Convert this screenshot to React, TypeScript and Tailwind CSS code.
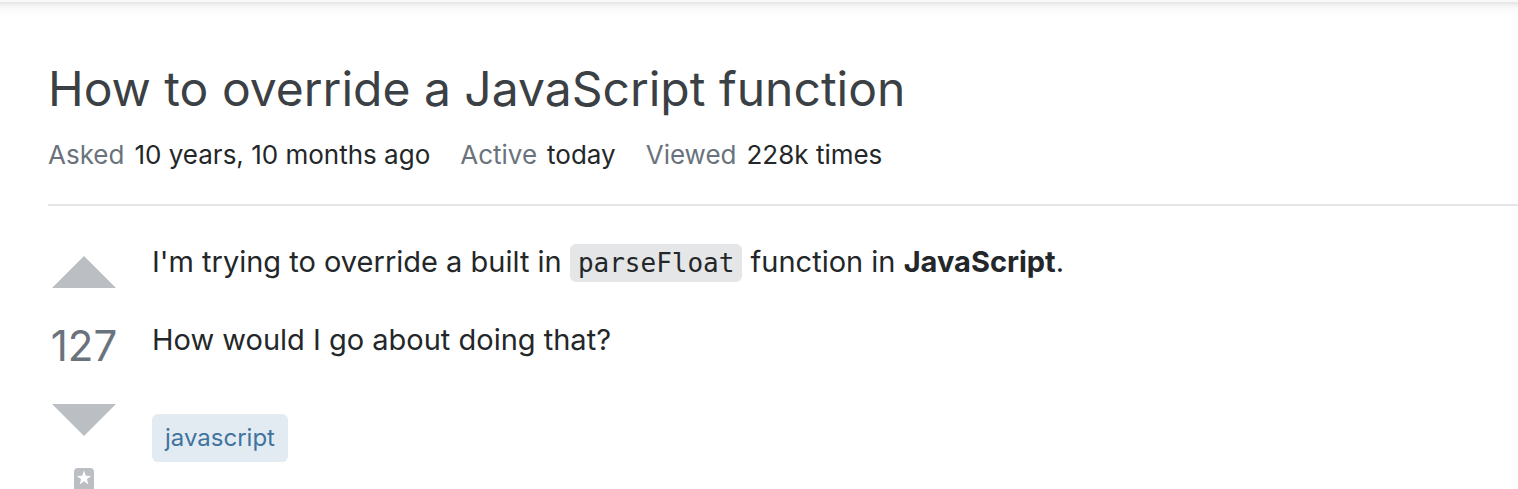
export default function App() {
  return (
    <div className="overflow-hidden bg-white font-['Inter','Liberation_Sans',sans-serif] text-[#242729]">
      <header className="-mx-6 -mt-12 h-[50px] bg-[#f8f8f8] shadow-[0_2px_4px_rgba(0,0,0,0.05),0_2px_8px_rgba(0,0,0,0.05),0_4px_16px_rgba(0,0,0,0.05)]" />
      <main className="pl-12">
        <h1 className="pt-[52px] text-[48px] leading-[70px] text-[#3b4045]">How to override a JavaScript function</h1>
        <dl className="flex gap-[30px] border-b-2 border-[#e4e5e7] pt-[14px] pb-8 text-[26px] leading-[34px]">
          <div className="flex gap-[10px]"><dt className="text-[#6a737c]">Asked</dt><dd>10 years, 10 months ago</dd></div>
          <div className="flex gap-[10px]"><dt className="text-[#6a737c]">Active</dt><dd>today</dd></div>
          <div className="flex gap-[10px]"><dt className="text-[#6a737c]">Viewed</dt><dd>228k times</dd></div>
        </dl>
        <div className="flex gap-8 pt-[30px]">
          <div className="flex w-[72px] shrink-0 flex-col items-center text-[#bbbfc3]">
            <button type="button" aria-label="Up vote"><svg className="size-[72px]" viewBox="0 0 36 36" fill="currentColor"><path d="M2 26h32L18 10z" /></svg></button>
            <div className="py-3 text-[42px] leading-[52px] text-[#6a737c]">127</div>
            <button type="button" aria-label="Down vote"><svg className="size-[72px]" viewBox="0 0 36 36" fill="currentColor"><path d="M2 10h32L18 26z" /></svg></button>
            <button type="button" aria-label="Bookmark" className="pt-3">
              <svg width="20" height="36" viewBox="0 0 20 36" fill="currentColor">
                <path d="M4 0h12a4 4 0 0 1 4 4v32l-10-8-10 8V4a4 4 0 0 1 4-4z" />
                <path fill="#fff" d="M10 2.6l1.8 5.2 5.3.1-4.2 3.3 1.5 5.2-4.4-3.1-4.4 3.1 1.5-5.2-4.2-3.3 5.3-.1z" />
              </svg>
            </button>
          </div>
          <div className="pt-[5px] text-[29px] leading-[42px]">
            <p>I'm trying to override a built in <code className="rounded-md bg-[#e4e6e8] px-2 py-1 font-['DejaVu_Sans_Mono',monospace] text-[26px] leading-[30px]">parseFloat</code> function in <strong>JavaScript</strong>.</p>
            <p className="pt-9">How would I go about doing that?</p>
            <a href="#javascript" className="mt-[53px] inline-block rounded-md bg-[#e3ebf2] px-[13px] text-[24px] leading-[48px] text-[#41739e]">javascript</a>
          </div>
        </div>
      </main>
    </div>
  );
}
